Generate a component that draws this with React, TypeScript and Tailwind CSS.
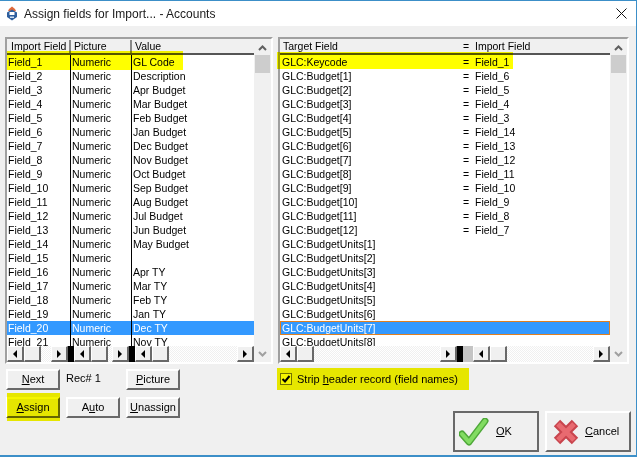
import type { ReactNode } from 'react';

const leftRows = [
  ['Field_1', 'Numeric', 'GL Code'],
  ['Field_2', 'Numeric', 'Description'],
  ['Field_3', 'Numeric', 'Apr Budget'],
  ['Field_4', 'Numeric', 'Mar Budget'],
  ['Field_5', 'Numeric', 'Feb Budget'],
  ['Field_6', 'Numeric', 'Jan Budget'],
  ['Field_7', 'Numeric', 'Dec Budget'],
  ['Field_8', 'Numeric', 'Nov Budget'],
  ['Field_9', 'Numeric', 'Oct Budget'],
  ['Field_10', 'Numeric', 'Sep Budget'],
  ['Field_11', 'Numeric', 'Aug Budget'],
  ['Field_12', 'Numeric', 'Jul Budget'],
  ['Field_13', 'Numeric', 'Jun Budget'],
  ['Field_14', 'Numeric', 'May Budget'],
  ['Field_15', 'Numeric', ''],
  ['Field_16', 'Numeric', 'Apr TY'],
  ['Field_17', 'Numeric', 'Mar TY'],
  ['Field_18', 'Numeric', 'Feb TY'],
  ['Field_19', 'Numeric', 'Jan TY'],
  ['Field_20', 'Numeric', 'Dec TY'],
  ['Field_21', 'Numeric', 'Nov TY'],
];

const rightRows = [
  ['GLC:Keycode', 'Field_1'],
  ['GLC:Budget[1]', 'Field_6'],
  ['GLC:Budget[2]', 'Field_5'],
  ['GLC:Budget[3]', 'Field_4'],
  ['GLC:Budget[4]', 'Field_3'],
  ['GLC:Budget[5]', 'Field_14'],
  ['GLC:Budget[6]', 'Field_13'],
  ['GLC:Budget[7]', 'Field_12'],
  ['GLC:Budget[8]', 'Field_11'],
  ['GLC:Budget[9]', 'Field_10'],
  ['GLC:Budget[10]', 'Field_9'],
  ['GLC:Budget[11]', 'Field_8'],
  ['GLC:Budget[12]', 'Field_7'],
  ['GLC:BudgetUnits[1]', ''],
  ['GLC:BudgetUnits[2]', ''],
  ['GLC:BudgetUnits[3]', ''],
  ['GLC:BudgetUnits[4]', ''],
  ['GLC:BudgetUnits[5]', ''],
  ['GLC:BudgetUnits[6]', ''],
  ['GLC:BudgetUnits[7]', ''],
  ['GLC:BudgetUnits[8]', ''],
];

function ArrowBtn({ dir }: { dir: 'l' | 'r' }) {
  return (
    <div className="h-[16px] w-[17px] shrink-0 flex items-center justify-center bg-[#f0f0f0] border border-white border-r-2 border-b-2 border-r-[#696969] border-b-[#696969]">
      <svg width="6" height="8" viewBox="0 0 6 8">
        <path d={dir === 'l' ? 'M5 0V8L1 4Z' : 'M1 0V8L5 4Z'} fill="#000" />
      </svg>
    </div>
  );
}

function HScroll({ width }: { width: string }) {
  return (
    <div className={`${width} h-[16px] shrink-0 flex bg-[repeating-conic-gradient(#f0f0f0_0%_25%,#fff_0%_50%)] bg-[length:2px_2px]`}>
      <ArrowBtn dir="l" />
      <div className="h-[16px] w-[17px] shrink-0 bg-[#f0f0f0] border border-white border-r-2 border-b-2 border-r-[#696969] border-b-[#696969]" />
      <div className="flex-1" />
      <ArrowBtn dir="r" />
    </div>
  );
}

function VScroll() {
  return (
    <div className="w-[17px] shrink-0 flex flex-col items-center bg-[#f0f0f0]">
      <div className="h-[16px] shrink-0 flex items-center justify-center pt-[2px]">
        <svg width="9" height="6" viewBox="0 0 9 6">
          <path d="M1 5 4.5 1.5 8 5" fill="none" stroke="#606060" strokeWidth="2" />
        </svg>
      </div>
      <div className="w-[15px] h-[18px] bg-[#cdcdcd]" />
      <div className="flex-1" />
      <div className="h-[17px] shrink-0 flex items-center justify-center">
        <svg width="9" height="6" viewBox="0 0 9 6">
          <path d="M1 1 4.5 4.5 8 1" fill="none" stroke="#a0a0a0" strokeWidth="2" />
        </svg>
      </div>
    </div>
  );
}

function ActionBtn({ children }: { children: ReactNode }) {
  return (
    <button className="h-[21px] w-[54px] bg-[#f0f0f0] text-[11px] text-black border-2 border-white border-r-[#696969] border-b-[#696969] flex items-center justify-center">
      {children}
    </button>
  );
}

export default function App() {
  return (
    <div className="w-[639px] h-[457px] bg-white overflow-hidden relative font-['Liberation_Sans',sans-serif] text-[10.5px] text-black">
      <div className="w-[637px] h-[457px] bg-[#f0f0f0] flex flex-col border-t border-r border-b-2 border-[#3c8fc8]">
        {/* title bar */}
        <div className="h-[25px] shrink-0 bg-white flex items-center pl-[6px] pr-[9px]">
          <svg width="12" height="15" viewBox="0 0 12 15" className="shrink-0">
            <path d="M3 3 6 0.5 9 3 10 5H2Z" fill="#e0693a" />
            <path d="M6 3.5 11 6.5V11L6 14.5 1 11V6.5Z" fill="#2f5f9e" />
            <rect x="3.5" y="6" width="5" height="3" fill="#fff" />
            <rect x="4" y="10.5" width="4" height="1.5" fill="#cfe0f2" />
          </svg>
          <span className="ml-[6px] text-[12px] text-[#1a1a1a]">Assign fields for Import... - Accounts</span>
          <svg width="11" height="11" viewBox="0 0 11 11" className="ml-auto">
            <path d="M0.5 0.5 10.5 10.5M10.5 0.5 0.5 10.5" stroke="#111" strokeWidth="1" />
          </svg>
        </div>

        {/* lists */}
        <div className="flex gap-[5px] pl-[5px] pt-[11px]">
          {/* import list */}
          <div className="w-[268px] h-[327px] flex border-2 border-[#a0a0a0] border-r-white border-b-white shrink-0">
            <div className="flex-1 min-w-0 flex flex-col">
              <div className="h-[16px] shrink-0 flex border-b-2 border-b-[#555] pt-[1px] leading-[13px] whitespace-nowrap">
                <div className="w-[64px] pl-[4px] border-r-2 border-r-[#888]">Import Field</div>
                <div className="w-[61px] pl-[3px] border-r-2 border-r-[#888]">Picture</div>
                <div className="flex-1 pl-[3px]">Value</div>
              </div>
              <div className="flex-1 min-h-0 bg-white overflow-hidden">
                {leftRows.map((r, i) => (
                  <div key={r[0]} className={`h-[14px] flex leading-[14px] ${i === 19 ? 'bg-[#3399ff] text-white' : ''}`}>
                    <div className="w-[64px] pl-[1px] border-r border-r-black">{r[0]}</div>
                    <div className="w-[61px] pl-[1px] border-r border-r-black">{r[1]}</div>
                    <div className="flex-1 pl-[1px]">{r[2]}</div>
                  </div>
                ))}
              </div>
              <div className="flex h-[16px] shrink-0">
                <HScroll width="w-[61px]" />
                <div className="w-[6px] shrink-0 bg-black" />
                <HScroll width="w-[55px]" />
                <div className="w-[6px] shrink-0 bg-black" />
                <HScroll width="flex-1" />
              </div>
            </div>
            <VScroll />
          </div>

          {/* target list */}
          <div className="w-[351px] h-[327px] flex border-2 border-[#a0a0a0] border-r-white border-b-white shrink-0">
            <div className="flex-1 min-w-0 flex flex-col">
              <div className="h-[16px] shrink-0 flex border-b-2 border-b-[#555] pt-[1px] leading-[13px]">
                <div className="w-[183px] pl-[3px]">Target Field</div>
                <div className="flex-1 whitespace-pre">=  Import Field</div>
              </div>
              <div className="flex-1 min-h-0 bg-white overflow-hidden">
                {rightRows.map((r, i) => (
                  <div
                    key={r[0]}
                    className={`h-[14px] flex leading-[14px] ${i === 19 ? 'bg-[#3399ff] text-white outline outline-1 -outline-offset-1 outline-[#e08020]' : ''}`}
                  >
                    <div className="w-[183px] pl-[2px]">{r[0]}</div>
                    {r[1] && <div className="whitespace-pre">=  {r[1]}</div>}
                  </div>
                ))}
              </div>
              <div className="flex h-[16px] shrink-0">
                <HScroll width="w-[177px]" />
                <div className="w-[6px] shrink-0 bg-black" />
                <div className="w-[10px] shrink-0 bg-[#c4c4c4]" />
                <HScroll width="flex-1" />
              </div>
            </div>
            <VScroll />
          </div>
        </div>

        {/* bottom controls */}
        <div className="flex flex-1 min-h-0">
          <div className="w-[277px] shrink-0 pl-[6px] pt-[5px] flex flex-col gap-[7px]">
            <div className="flex items-center">
              <ActionBtn><span><u>N</u>ext</span></ActionBtn>
              <span className="ml-[6px] w-[60px] -mt-[2px] text-[11px]">Rec# 1</span>
              <ActionBtn><span><u>P</u>icture</span></ActionBtn>
            </div>
            <div className="flex gap-[6px]">
              <ActionBtn><span><u>A</u>ssign</span></ActionBtn>
              <ActionBtn><span>A<u>u</u>to</span></ActionBtn>
              <ActionBtn><span><u>U</u>nassign</span></ActionBtn>
            </div>
          </div>
          <div className="flex-1 flex flex-col">
            <div className="mt-[4px] h-[22px] flex items-center pl-[3px]">
              <div className="w-[12px] h-[12px] bg-white border border-[#777] flex items-center justify-center">
                <svg width="10" height="10" viewBox="0 0 10 10">
                  <path d="M1.5 5 4 7.5 8.5 2" fill="none" stroke="#000" strokeWidth="2" />
                </svg>
              </div>
              <span className="ml-[5px] text-[11px]">Strip <u>h</u>eader record (field names)</span>
            </div>
            <div className="flex gap-[6px] justify-end pr-[5px] mt-[21px]">
              <button className="w-[86px] h-[41px] bg-[#f0f0f0] border-2 border-[#696969] flex items-center pl-[4px] text-[11px]">
                <svg width="30" height="28" viewBox="0 0 30 28" className="shrink-0">
                  <path d="M3 16 10 24 26 3" fill="none" stroke="#4fa83a" strokeWidth="7" strokeLinecap="round" strokeLinejoin="round" />
                  <path d="M3 16 10 24 26 3" fill="none" stroke="#82dc62" strokeWidth="4" strokeLinecap="round" strokeLinejoin="round" />
                </svg>
                <span className="ml-[7px]"><u>O</u>K</span>
              </button>
              <button className="w-[86px] h-[41px] bg-[#f0f0f0] border-2 border-white border-r-[#696969] border-b-[#696969] flex items-center pl-[5px] text-[11px]">
                <svg width="28" height="28" viewBox="0 0 28 28" className="shrink-0">
                  <path d="M5 5 23 23M23 5 5 23" fill="none" stroke="#c8444d" strokeWidth="9" />
                  <path d="M6 6 22 22M22 6 6 22" fill="none" stroke="#e86a70" strokeWidth="5" />
                </svg>
                <span className="ml-[5px]"><u>C</u>ancel</span>
              </button>
            </div>
          </div>
        </div>
      </div>

      {/* yellow marker annotations */}
      <div className="absolute left-[7px] top-[51px] w-[176px] h-[19px] bg-[#ffff00] mix-blend-multiply" />
      <div className="absolute left-[277px] top-[52px] w-[236px] h-[17px] bg-[#ffff00] mix-blend-multiply" />
      <div className="absolute left-[7px] top-[393px] w-[53px] h-[28px] bg-[#f5f500] mix-blend-multiply" />
      <div className="absolute left-[277px] top-[368px] w-[192px] h-[22px] bg-[#f5f500] mix-blend-multiply" />
    </div>
  );
}
